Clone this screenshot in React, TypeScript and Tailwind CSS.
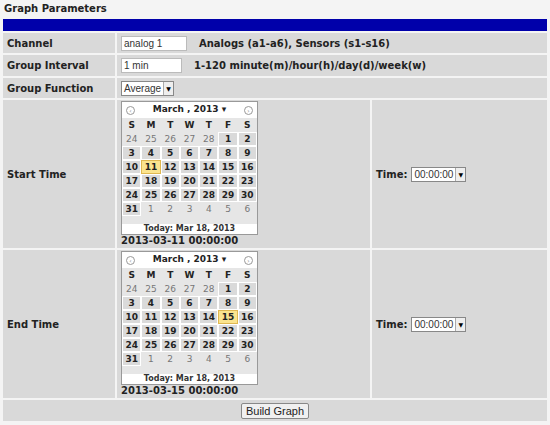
import React from 'react'

const font = { fontFamily: '"DejaVu Sans", Verdana, sans-serif' }
const inputFont = { fontFamily: '"Liberation Sans", Arial, sans-serif' }

function Calendar({ selected, date }: { selected: number; date: string }) {
  const cells: { d: number; cur: boolean }[] = []
  ;[24, 25, 26, 27, 28].forEach((d) => cells.push({ d, cur: false }))
  for (let d = 1; d <= 31; d++) cells.push({ d, cur: true })
  ;[1, 2, 3, 4, 5, 6].forEach((d) => cells.push({ d, cur: false }))
  return (
    <div className="py-[1px] pl-1">
      <div className="w-[137px] border border-[#999] bg-white">
        <div className="flex items-center justify-between px-1 h-[16px]">
          <span className="w-[9px] h-[9px] rounded-full border border-[#999] text-[6px] leading-[7px] text-center text-[#777]">‹</span>
          <span className="text-[9px] font-bold text-[#222]">March , 2013 ▾</span>
          <span className="w-[9px] h-[9px] rounded-full border border-[#999] text-[6px] leading-[7px] text-center text-[#777]">›</span>
        </div>
        <div className="bg-[#e6e6e6] grid grid-cols-7 text-[9px] font-bold text-center h-[14px] leading-[14px] text-[#222]">
          {['S', 'M', 'T', 'W', 'T', 'F', 'S'].map((d, i) => <span key={i}>{d}</span>)}
        </div>
        <div className="bg-[#e6e6e6] grid grid-cols-7 text-[9px] text-center">
          {cells.map((c, i) => (
            <span
              key={i}
              className={`h-[14px] leading-[13px] border ${
                !c.cur
                  ? 'border-transparent text-[#777]'
                  : c.d === selected
                  ? 'border-[#e0b850] bg-[#fbe48e] font-bold text-[#222]'
                  : 'border-white bg-[#dadada] font-bold text-[#222]'
              }`}
            >
              {c.d}
            </span>
          ))}
        </div>
        <div className="bg-[#e6e6e6] h-[8px]" />
        <div className="text-center text-[8px] font-bold text-[#333] leading-[10px]">Today: Mar 18, 2013</div>
      </div>
      <div className="text-[10px] font-bold text-[#222] leading-[12px]">{date}</div>
    </div>
  )
}

function TimeSelect() {
  return (
    <div className="flex items-center gap-1">
      <span className="text-[10px] font-bold text-[#222]">Time:</span>
      <div className="flex items-center border border-[#888] bg-white h-[15px]">
        <span className="text-[10px] px-[2px] text-[#333]" style={inputFont}>00:00:00</span>
        <span className="w-[10px] h-[13px] border-l border-[#aaa] bg-[#eee] text-[6px] leading-[13px] text-center">▼</span>
      </div>
    </div>
  )
}

export default function App() {
  const label = 'w-[112px] shrink-0 bg-[#d9d9d9] px-1 flex items-center text-[10px] font-bold text-[#222]'
  const value = 'flex-1 bg-[#d9d9d9] flex items-center px-1 gap-3'
  return (
    <div className="w-[550px] h-[425px] bg-[#f4f4f4] px-[3px]" style={font}>
      <div className="h-[19px] text-[10px] font-bold text-[#222] leading-[17px] px-[1px]">Graph Parameters</div>
      <div className="flex flex-col gap-[2px]">
        <div className="h-[12px] bg-[#0000aa]" />
        <div className="flex gap-[2px] h-[20px]">
          <div className={label}>Channel</div>
          <div className={value}>
            <span className="w-[66px] h-[15px] bg-white border border-[#bbb] text-[10px] px-[2px] leading-[13px] text-[#333]" style={inputFont}>analog 1</span>
            <span className="text-[10px] font-bold text-[#222]">Analogs (a1-a6), Sensors (s1-s16)</span>
          </div>
        </div>
        <div className="flex gap-[2px] h-[21px]">
          <div className={label}>Group Interval</div>
          <div className={value}>
            <span className="w-[61px] h-[15px] bg-white border border-[#bbb] text-[10px] px-[2px] leading-[13px] text-[#333]" style={inputFont}>1 min</span>
            <span className="text-[10px] font-bold text-[#222]">1-120 minute(m)/hour(h)/day(d)/week(w)</span>
          </div>
        </div>
        <div className="flex gap-[2px] h-[20px]">
          <div className={label}>Group Function</div>
          <div className={value}>
            <div className="flex items-center border border-[#888] bg-white h-[15px]">
              <span className="text-[10px] px-[2px] text-[#333]" style={inputFont}>Average</span>
              <span className="w-[10px] h-[13px] border-l border-[#aaa] bg-[#eee] text-[6px] leading-[13px] text-center">▼</span>
            </div>
          </div>
        </div>
        {[
          ['Start Time', 11, '2013-03-11 00:00:00'],
          ['End Time', 15, '2013-03-15 00:00:00'],
        ].map(([l, s, d]) => (
          <div key={l as string} className="flex gap-[2px]">
            <div className={label}>{l}</div>
            <div className="w-[253px] bg-[#d9d9d9]">
              <Calendar selected={s as number} date={d as string} />
            </div>
            <div className="flex-1 bg-[#d9d9d9] flex items-center px-1">
              <TimeSelect />
            </div>
          </div>
        ))}
        <div className="h-[21px] bg-[#d9d9d9] flex items-center justify-center">
          <span className="border border-[#888] bg-[#f0f0f0] rounded-[2px] px-1 h-[16px] text-[11px] leading-[14px] text-[#222]" style={inputFont}>Build Graph</span>
        </div>
      </div>
    </div>
  )
}
